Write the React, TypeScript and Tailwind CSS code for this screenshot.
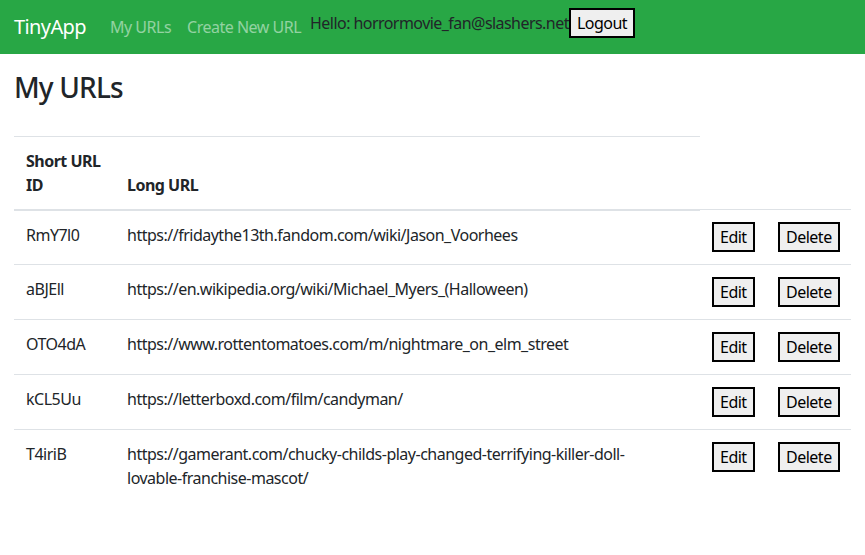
import React from 'react'

const urls = [
  { id: 'RmY7l0', long: ['https://fridaythe13th.fandom.com/wiki/Jason_Voorhees'] },
  { id: 'aBJEll', long: ['https://en.wikipedia.org/wiki/Michael_Myers_(Halloween)'] },
  { id: 'OTO4dA', long: ['https://www.rottentomatoes.com/m/nightmare_on_elm_street'] },
  { id: 'kCL5Uu', long: ['https://letterboxd.com/film/candyman/'] },
  {
    id: 'T4iriB',
    long: [
      'https://gamerant.com/chucky-childs-play-changed-terrifying-killer-doll-',
      'lovable-franchise-mascot/',
    ],
  },
]

const btn =
  'h-[30px] px-[6px] border-2 border-black bg-[#efefef] text-black text-[16px] leading-none'

const cell = 'p-3 align-top border-t border-[#dee2e6]'
const head = 'text-left font-bold align-bottom p-3 border-t border-b-2 border-[#dee2e6]'

export default function App() {
  return (
    <div className="min-h-screen bg-white text-[#212529] text-[16px] leading-6 tracking-[-0.5px] font-['Noto_Sans',sans-serif]">
      {/* navbar */}
      <nav className="flex items-center h-[54px] bg-[#28a745] px-[14px]">
        <span className="text-[20px] tracking-[-0.6px] text-white mr-[24px]">TinyApp</span>
        <a className="text-white/50 mr-[16px]">My URLs</a>
        <a className="text-white/50">Create New URL</a>
        <div className="flex items-center ml-[9px] mb-[8px]">
          <span className="text-[#212529] tracking-[-0.55px]">Hello: horrormovie_fan@slashers.net</span>
          <button className={btn}>Logout</button>
        </div>
      </nav>

      <main className="px-[14px]">
        <h3 className="text-[28px] tracking-[-0.84px] font-medium leading-[1.2] mt-[17px] mb-[31px]">
          My URLs
        </h3>

        <table className="w-full table-fixed border-collapse">
          <colgroup>
            <col className="w-[101px]" />
            <col />
            <col className="w-[66px]" />
            <col className="w-[85px]" />
          </colgroup>
          <thead>
            <tr>
              <th className={head}>Short URL ID</th>
              <th className={head}>Long URL</th>
            </tr>
          </thead>
          <tbody>
            {urls.map((u) => (
              <tr key={u.id}>
                <td className={cell}>{u.id}</td>
                <td className={`${cell} break-words`}>
                  {u.long.map((part, i) => (
                    <React.Fragment key={i}>
                      {i > 0 && <br />}
                      {part}
                    </React.Fragment>
                  ))}
                </td>
                <td className={cell}>
                  <button className={btn}>Edit</button>
                </td>
                <td className={cell}>
                  <button className={btn}>Delete</button>
                </td>
              </tr>
            ))}
          </tbody>
        </table>
      </main>
    </div>
  )
}
